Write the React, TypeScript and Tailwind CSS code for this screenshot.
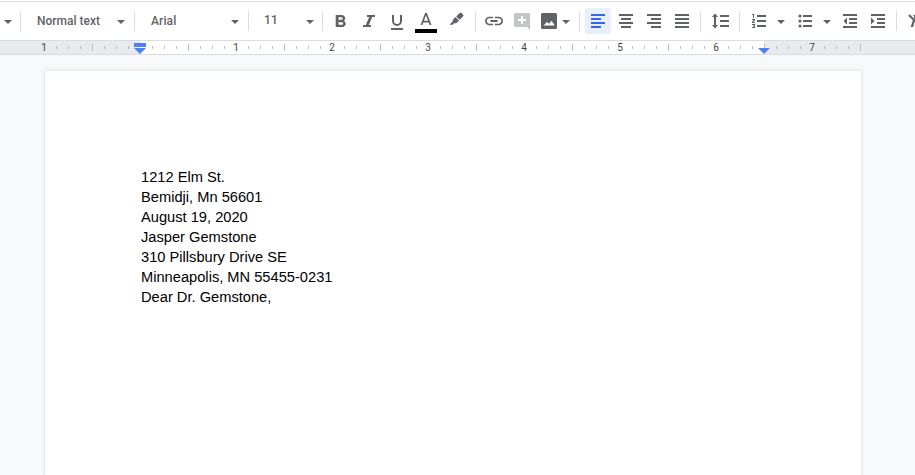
import React from "react";

const Sep = () => <div className="h-5 w-px shrink-0 bg-[#dadce0]" />;

const Caret = () => (
  <svg width="8" height="4" viewBox="0 0 8 4" className="mt-0.5 shrink-0" fill="#5f6368">
    <path d="M0 0h8L4 4z" />
  </svg>
);

const Tool = ({ children, active, className = "" }: { children: React.ReactNode; active?: boolean; className?: string }) => (
  <div className={`h-[26px] w-[26px] shrink-0 rounded-[2px] ${active ? "bg-[#e8f0fe] text-[#3367e6]" : "text-[#5f6368]"} ${className}`}>
    <svg width="26" height="26" viewBox="0 0 26 26" fill="currentColor">
      {children}
    </svg>
  </div>
);

const Label = ({ text, className, textClass = "" }: { text: string; className: string; textClass?: string }) => (
  <div className={`flex h-[26px] shrink-0 items-center justify-between text-[12px] font-medium text-[#5f6368] ${className}`}>
    <span className={`whitespace-nowrap ${textClass}`}>{text}</span>
    <Caret />
  </div>
);

function Toolbar() {
  return (
    <div className="flex h-[38px] w-[915px] shrink-0 items-center overflow-hidden bg-white">
      <div className="flex w-5 shrink-0 pl-1"><Caret /></div>
      <Sep />
      <Label text="Normal text" className="w-[113px] pl-4 pr-[9px]" />
      <Sep />
      <Label text="Arial" className="w-[113px] pl-4 pr-[9px] tracking-[0.1px]" />
      <Sep />
      <Label text="11" className="w-[73px] pl-[15px] pr-2" textClass="mb-0.5 tracking-[0.3px]" />
      <Sep />
      <Tool className="ml-[5px]">
        <path transform="translate(1.2 3.57) scale(.93 .857)" d="M15.6 10.79c.97-.67 1.65-1.77 1.65-2.79 0-2.26-1.75-4-4-4H7v14h7.04c2.09 0 3.71-1.7 3.71-3.79 0-1.52-.86-2.82-2.15-3.42zM10 6.5h3c.83 0 1.5.67 1.5 1.5s-.67 1.5-1.5 1.5h-3v-3zm3.5 9H10v-3h3.5c.83 0 1.5.67 1.5 1.5s-.67 1.5-1.5 1.5z" />
      </Tool>
      <Tool className="ml-0.5">
        <path d="M11 7h8v2h-2.8l-3.4 8H15v2H7v-2h2.8l3.4-8H11z" />
      </Tool>
      <Tool className="ml-0.5">
        <path d="M8 7h2v6a3 3 0 0 0 6 0V7h2v6a5 5 0 0 1-10 0zM7 20h12v2H7z" />
      </Tool>
      <Tool className="ml-[3px]">
        <path transform="translate(2.85 2.43) scale(.846 .857)" d="M11 3L5.5 17h2.25l1.12-3h6.25l1.12 3h2.25L13 3h-2zm-1.38 9L12 5.67 14.38 12H9.62z" />
        <path fill="#000" d="M2 21h22v4H2z" />
      </Tool>
      <Tool className="ml-1">
        <path d="M13.2 8.4 16.6 5q1-1 2 0l1.400 1.400q1 1 0 2l-3.400 3.400zM12.500 9l3.500 3.500-2.700 2.800H11L9.700 16.800H6.500l3.300-3.500v-1.600z" />
      </Tool>
      <div className="w-1.5 shrink-0" />
      <Sep />
      <Tool className="ml-[5px]">
        <path transform="translate(2.2 2.8) scale(.9 .85)" d="M3.9 12c0-1.71 1.39-3.1 3.1-3.1h4V7H7c-2.76 0-5 2.24-5 5s2.24 5 5 5h4v-1.9H7c-1.71 0-3.1-1.39-3.1-3.1zM8 13.2h8v-2.4H8v2.4zm9-6.2h-4v1.9h4c1.71 0 3.1 1.39 3.1 3.1s-1.39 3.1-3.1 3.1h-4V17h4c2.76 0 5-2.24 5-5s-2.24-5-5-5z" />
      </Tool>
      <Tool className="ml-0.5">
        <path fill="#c4c5c7" d="M6 5h14q1 0 1 1v16l-3-3H6q-1 0-1-1V6q0-1 1-1z" />
        <path fill="#fff" d="M12 8h2v3h3v2h-3v3h-2v-3H9v-2h3z" />
      </Tool>
      <Tool className="ml-0.5">
        <path fillRule="evenodd" d="M5.5 5h13Q20 5 20 6.500v13q0 1.500-1.500 1.500h-13Q4 21 4 19.500v-13Q4 5 5.500 5zM6.500 17.500h11.300l-3.300-4.800-2.300 3.100-2.200-1.900z" />
      </Tool>
      <div className="flex w-4 shrink-0"><div className="-ml-px flex"><Caret /></div></div>
      <Sep />
      <Tool active className="ml-[5px]">
        <path d="M6 6h14v2H6zM6 10h10v2H6zM6 14h14v2H6zM6 18h10v2H6z" />
      </Tool>
      <Tool className="ml-0.5">
        <path d="M6 6h14v2H6zM8 10h10v2H8zM6 14h14v2H6zM8 18h10v2H8z" />
      </Tool>
      <Tool className="ml-0.5">
        <path d="M6 6h14v2H6zM10 10h10v2H10zM6 14h14v2H6zM10 18h10v2H10z" />
      </Tool>
      <Tool className="ml-0.5">
        <path d="M6 6h14v2H6zM6 10h14v2H6zM6 14h14v2H6zM6 18h14v2H6z" />
      </Tool>
      <div className="w-[5px] shrink-0" />
      <Sep />
      <Tool className="ml-1.5">
        <path d="M8 5.500 11 9H9v8h2l-3 3.500L5 17h2V9H5zM13 7h9v2h-9zM13 12h9v2h-9zM13 17h9v2h-9z" />
      </Tool>
      <div className="w-1.5 shrink-0" />
      <Sep />
      <Tool className="ml-1.5">
        <path d="M6 6h2v4H7V7H6zM6 11h3v1.200L7.300 14H9v1H6v-1l1.600-2H6zM6 16h3v4H6v-1h2v-.6H7v-.8h1V17H6zM11 7h9v2h-9zM11 12h9v2h-9zM11 17h9v2h-9z" />
      </Tool>
      <div className="ml-[5px] flex shrink-0"><Caret /></div>
      <Tool className="ml-[7px]">
        <circle cx="8" cy="8" r="1.600" />
        <circle cx="8" cy="13" r="1.600" />
        <circle cx="8" cy="18" r="1.600" />
        <path d="M11 7h9v2h-9zM11 12h9v2h-9zM11 17h9v2h-9z" />
      </Tool>
      <div className="ml-[5px] flex shrink-0"><Caret /></div>
      <Tool className="ml-1.5">
        <path d="M6 6h14v2H6zM12 10h8v2h-8zM12 14h8v2h-8zM6 18h14v2H6zM10 9.500v7L6.500 13z" />
      </Tool>
      <Tool className="ml-0.5">
        <path d="M6 6h14v2H6zM12 10h8v2h-8zM12 14h8v2h-8zM6 18h14v2H6zM6 9.500v7L9.500 13z" />
      </Tool>
      <div className="w-[5px] shrink-0" />
      <Sep />
      <Tool className="ml-[5px]">
        <path d="m6.200 7.700 1.500-1.400L20 18.600 18.600 20l-6-6-1.500 5H8.700l2.100-6.700zM11 7h9v2h-5.500l-1 2.500-1.600-1.600.3-.9z" />
      </Tool>
    </div>
  );
}

const cells = Array.from({ length: 69 }, (_, i) => i);

function Ruler() {
  return (
    <div className="relative flex h-[15px] w-[915px] shrink-0 overflow-hidden border-y border-[#dadce0] bg-[#e8eaed]">
      <div className="w-[141px] shrink-0" />
      <div className="h-full w-[623px] bg-white" />
      <div className="absolute inset-y-0 left-[38px] flex items-center text-[10px] text-[#444]">
        {cells.map((i) => {
          const major = i % 8 === 0;
          const half = i % 8 === 4;
          const inch = Math.abs(i / 8 - 1);
          return (
            <div key={i} className="flex w-3 shrink-0 items-center justify-center">
              {major ? (
                <span className="leading-[13px]">{inch || ""}</span>
              ) : (
                <span className={`ml-px w-px bg-[#b8babe] ${half ? "h-[7px]" : "h-[3px]"}`} />
              )}
            </div>
          );
        })}
      </div>
      <svg className="absolute left-[134px] top-[2px]" width="12" height="11" fill="#4d80f5">
        <path d="M0 0h12v4H0zM0 5h12L6 11z" />
      </svg>
      <svg className="absolute left-[758px] top-[7px]" width="12" height="6" fill="#4d80f5">
        <path d="M0 0h12L6 6z" />
      </svg>
    </div>
  );
}

const lines = [
  "1212 Elm St.",
  "Bemidji, Mn 56601",
  "August 19, 2020",
  "Jasper Gemstone",
  "310 Pillsbury Drive SE",
  "Minneapolis, MN 55455-0231",
  "Dear Dr. Gemstone,",
];

export default function App() {
  return (
    <div className="flex h-[475px] w-[915px] flex-col overflow-hidden bg-[#f8f9fa] font-['Roboto',sans-serif]">
      <div className="h-0.5 shrink-0 border-b border-[#dadce0] bg-white" />
      <Toolbar />
      <Ruler />
      <div className="ml-[45px] mt-4 w-[816px] grow bg-white pl-24 pt-24 font-['Liberation_Sans',Arial,sans-serif] text-[14.667px] leading-5 text-black shadow-[0_0_3px_1px_rgba(60,64,67,0.12)]">
        {lines.map((line) => (
          <p key={line}>{line}</p>
        ))}
      </div>
    </div>
  );
}
